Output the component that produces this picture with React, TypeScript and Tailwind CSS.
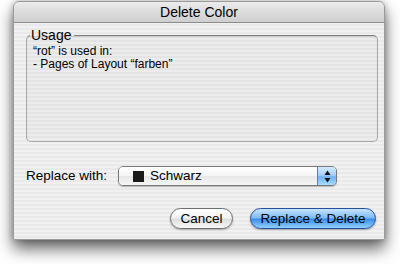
const FONT = "font-['Lucida_Grande','Liberation_Sans',Arial,sans-serif]";

function PopupArrows() {
  return (
    <svg width="7" height="13" viewBox="0 0 7 13" className="block">
      <path d="M3.5 0.5 L6.5 5 L0.5 5 Z" fill="#111" />
      <path d="M3.5 12.5 L6.5 8 L0.5 8 Z" fill="#111" />
    </svg>
  );
}

export default function App() {
  return (
    <div className={`h-[264px] w-[400px] overflow-hidden bg-white pt-[1px] ${FONT} text-black`}>
      <div className="ml-[13px] flex h-[239px] w-[372px] flex-col rounded-t-[6px] border border-[#9a9a9a] bg-[repeating-linear-gradient(180deg,#f1f1f1_0px,#f1f1f1_2px,#e9e9e9_2px,#e9e9e9_4px)] shadow-[0_9px_16px_rgba(0,0,0,0.6),0_0_6px_rgba(0,0,0,0.25)]">
        {/* title bar */}
        <div className="flex h-[21px] shrink-0 items-center justify-center rounded-t-[6px] border-b border-[#8c8c8c] bg-[linear-gradient(180deg,#ececec_0%,#dcdcdc_50%,#cfcfcf_100%)] text-[14px] leading-none">
          Delete Color
        </div>

        <div className="flex flex-1 flex-col pl-[12px] pr-[8px] pt-[5px]">
          {/* usage group */}
          <fieldset className="m-0 h-[114px] w-[352px] rounded-[5px] border border-[#a8a8a8] border-t-[#7f7f7f] bg-[rgba(0,0,0,0.02)] px-[6px] pb-0 pt-0 shadow-[inset_0_1px_1px_rgba(0,0,0,0.12)]">
            <legend className="ml-[-3px] pl-[1px] pr-[3px] text-[14px] leading-[14px]">Usage</legend>
            <div className="mt-[3px] text-[12px] leading-[13px]">
              <div>“rot” is used in:</div>
              <div>- Pages of Layout “farben”</div>
            </div>
          </fieldset>

          {/* replace row */}
          <div className="mt-[24px] flex items-center">
            <span className="w-[92px] text-[13.5px] leading-none">Replace with:</span>
            <div className="flex h-[20px] w-[219px] items-stretch overflow-hidden rounded-[5px] border border-[#7a7a7a] shadow-[0_1px_1px_rgba(0,0,0,0.25)]">
              <div className="flex flex-1 items-center gap-[6px] bg-[linear-gradient(180deg,#ffffff_0%,#f4f4f4_50%,#e6e6e6_51%,#f6f6f6_100%)] pl-[14px] text-[13.5px] leading-none">
                <span className="h-[11px] w-[11px] bg-[#1a1a1a]" />
                <span>Schwarz</span>
              </div>
              <div className="flex w-[19px] items-center justify-center border-l border-[#5a7fb0] bg-[linear-gradient(180deg,#d4e9ff_0%,#a8d0fb_45%,#6fb1f3_55%,#a8dcff_100%)]">
                <PopupArrows />
              </div>
            </div>
          </div>

          {/* buttons */}
          <div className="mt-[22px] flex justify-end gap-[17px]">
            <button className="flex h-[21px] w-[63px] items-center justify-center rounded-full border border-[#6e6e6e] bg-[linear-gradient(180deg,#ffffff_0%,#f2f2f2_45%,#dedede_55%,#f8f8f8_100%)] text-[13.5px] leading-none shadow-[0_1px_2px_rgba(0,0,0,0.3)]">
              Cancel
            </button>
            <button className="flex h-[21px] w-[126px] items-center justify-center rounded-full border border-[#27509a] bg-[linear-gradient(180deg,#c7e4ff_0%,#7fbcf6_45%,#3e8fe8_55%,#8fd0ff_100%)] text-[13.5px] leading-none shadow-[0_1px_2px_rgba(0,0,0,0.35)]">
              Replace &amp; Delete
            </button>
          </div>
        </div>
      </div>
    </div>
  );
}
